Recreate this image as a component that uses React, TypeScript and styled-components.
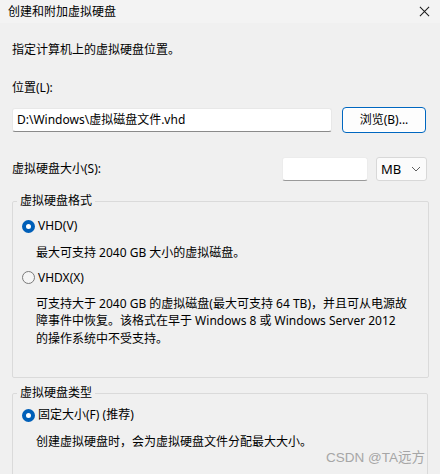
import React from 'react';
import styled, { createGlobalStyle } from 'styled-components';

const GlobalStyle = createGlobalStyle`
    html, body {
        margin: 0;
        padding: 0;
        background: #f0f0f0;
    }
    body {
        font-family: "Noto Sans", "Noto Sans CJK SC", sans-serif;
        font-size: 12px;
        color: #000;
    }
`;

const App = () => {
  return (
    <Window>
        <GlobalStyle />
        <TitleBar>
            <span>创建和附加虚拟硬盘</span>
            <CloseIcon viewBox="0 0 12 12">
                <path d="M1 1 L11 11 M11 1 L1 11" stroke="#1a1a1a" strokeWidth="1.1" fill="none" />
            </CloseIcon>
        </TitleBar>
        <Body>
            <Intro>指定计算机上的虚拟硬盘位置。</Intro>
            <FieldLabel>位置(L):</FieldLabel>
            <PathRow>
                <TextBox>D:\Windows\虚拟磁盘文件.vhd</TextBox>
                <BrowseButton>浏览(B)...</BrowseButton>
            </PathRow>
            <SizeRow>
                <span>虚拟硬盘大小(S):</span>
                <SizeBox />
                <Select>
                    <span>MB</span>
                    <svg width="10" height="6" viewBox="0 0 10 6">
                        <path d="M1 1 L5 5 L9 1" stroke="#5f5f5f" strokeWidth="1" fill="none" />
                    </svg>
                </Select>
            </SizeRow>

            <Group>
                <Legend>虚拟硬盘格式</Legend>
                <GroupInner $top={8} $bottom={30}>
                    <RadioRow>
                        <Radio checked />
                        <span>VHD(V)</span>
                    </RadioRow>
                    <Desc $top={9}>最大可支持 2040 GB 大小的虚拟磁盘。</Desc>
                    <RadioRow $top={7}>
                        <Radio />
                        <span>VHDX(X)</span>
                    </RadioRow>
                    <Desc $top={8}>
                        可支持大于 2040 GB 的虚拟磁盘(最大可支持 64 TB)，并且可从电源故<br />
                        障事件中恢复。该格式在早于 Windows 8 或 Windows Server 2012<br />
                        的操作系统中不受支持。
                    </Desc>
                </GroupInner>
            </Group>

            <Group $second>
                <Legend>虚拟硬盘类型</Legend>
                <GroupInner $top={5} $bottom={40}>
                    <RadioRow>
                        <Radio checked />
                        <span>固定大小(F) (推荐)</span>
                    </RadioRow>
                    <Desc $top={9}>创建虚拟硬盘时，会为虚拟硬盘文件分配最大大小。</Desc>
                </GroupInner>
            </Group>
        </Body>
        <Watermark>CSDN @TA远方</Watermark>
    </Window>
  )
}

const Radio = ({ checked }: { checked?: boolean }) => (
    <RadioDot $checked={checked} />
);

export default App;

const Window = styled.div`
    position: relative;
    width: 440px;
    height: 474px;
    overflow: hidden;
    background: #f0f0f0;
    display: flex;
    flex-direction: column;
`;

const TitleBar = styled.div`
    height: 23px;
    flex-shrink: 0;
    display: flex;
    align-items: center;
    justify-content: space-between;
    padding: 0 10px 0 8px;
    background: #f3f3f3;
    line-height: 16px;
`;

const CloseIcon = styled.svg`
    width: 11px;
    height: 11px;
`;

const Body = styled.div`
    display: flex;
    flex-direction: column;
    padding: 0 12px 0 12px;
    line-height: 16px;
`;

const Intro = styled.div`
    margin-top: 19px;
`;

const FieldLabel = styled.div`
    margin-top: 22px;
`;

const PathRow = styled.div`
    margin-top: 11px;
    height: 26px;
    display: flex;
    align-items: center;
    gap: 10px;
`;

const TextBox = styled.div`
    width: 320px;
    height: 24px;
    box-sizing: border-box;
    background: #fff;
    border: 1px solid #e8e8e8;
    border-bottom-color: #8a8a8a;
    border-radius: 3px;
    padding: 0 4px;
    display: flex;
    align-items: center;
`;

const BrowseButton = styled.div`
    width: 84px;
    height: 26px;
    box-sizing: border-box;
    border: 1px solid #0067c0;
    border-radius: 4px;
    background: #fdfdfd;
    display: flex;
    align-items: center;
    justify-content: center;
    box-shadow: inset 0 0 0 1px #fff;
`;

const SizeRow = styled.div`
    margin-top: 24px;
    height: 24px;
    display: flex;
    align-items: center;
    & > span:first-child {
        flex: 1;
    }
`;

const SizeBox = styled.div`
    width: 86px;
    height: 24px;
    box-sizing: border-box;
    background: #fff;
    border: 1px solid #ececec;
    border-bottom-color: #9a9a9a;
    border-radius: 3px;
`;

const Select = styled.div`
    margin-left: 8px;
    margin-right: 1px;
    width: 51px;
    height: 24px;
    box-sizing: border-box;
    background: #fbfbfb;
    border: 1px solid #d8d8d8;
    border-radius: 3px;
    display: flex;
    align-items: center;
    justify-content: space-between;
    padding: 0 5px 0 4px;
    font-size: 13px;
`;

const Group = styled.fieldset<{ $second?: boolean }>`
    margin: ${p => p.$second ? '7px 0 0' : '12px -1px 0 0'};
    padding: 0;
    border: 1px solid #dadada;
    border-radius: 2px;
    min-width: 0;
`;

const Legend = styled.legend`
    margin-left: 4px;
    padding: 0 3px;
    line-height: 16px;
`;

const GroupInner = styled.div<{ $top: number; $bottom: number }>`
    display: flex;
    flex-direction: column;
    padding: ${p => p.$top}px 0 ${p => p.$bottom}px 9px;
`;

const RadioRow = styled.div<{ $top?: number }>`
    margin-top: ${p => p.$top ?? 0}px;
    height: 18px;
    display: flex;
    align-items: center;
    gap: 3px;
`;

const RadioDot = styled.span<{ $checked?: boolean }>`
    width: 13px;
    height: 13px;
    box-sizing: border-box;
    border-radius: 50%;
    flex-shrink: 0;
    ${p => p.$checked
        ? `background: #fff; border: 4px solid #005fb8;`
        : `background: #f5f5f5; border: 1px solid #7a7a7a;`}
`;

const Desc = styled.div<{ $top?: number }>`
    margin-top: ${p => p.$top ?? 0}px;
    padding-left: 14px;
    line-height: 17.5px;
    white-space: nowrap;
`;

const Watermark = styled.div`
    position: absolute;
    right: 15px;
    bottom: 7px;
    font-size: 13.5px;
    line-height: 18px;
    color: #a6a6a6;
    font-family: "Liberation Sans", "Noto Sans CJK SC", sans-serif;
`;
